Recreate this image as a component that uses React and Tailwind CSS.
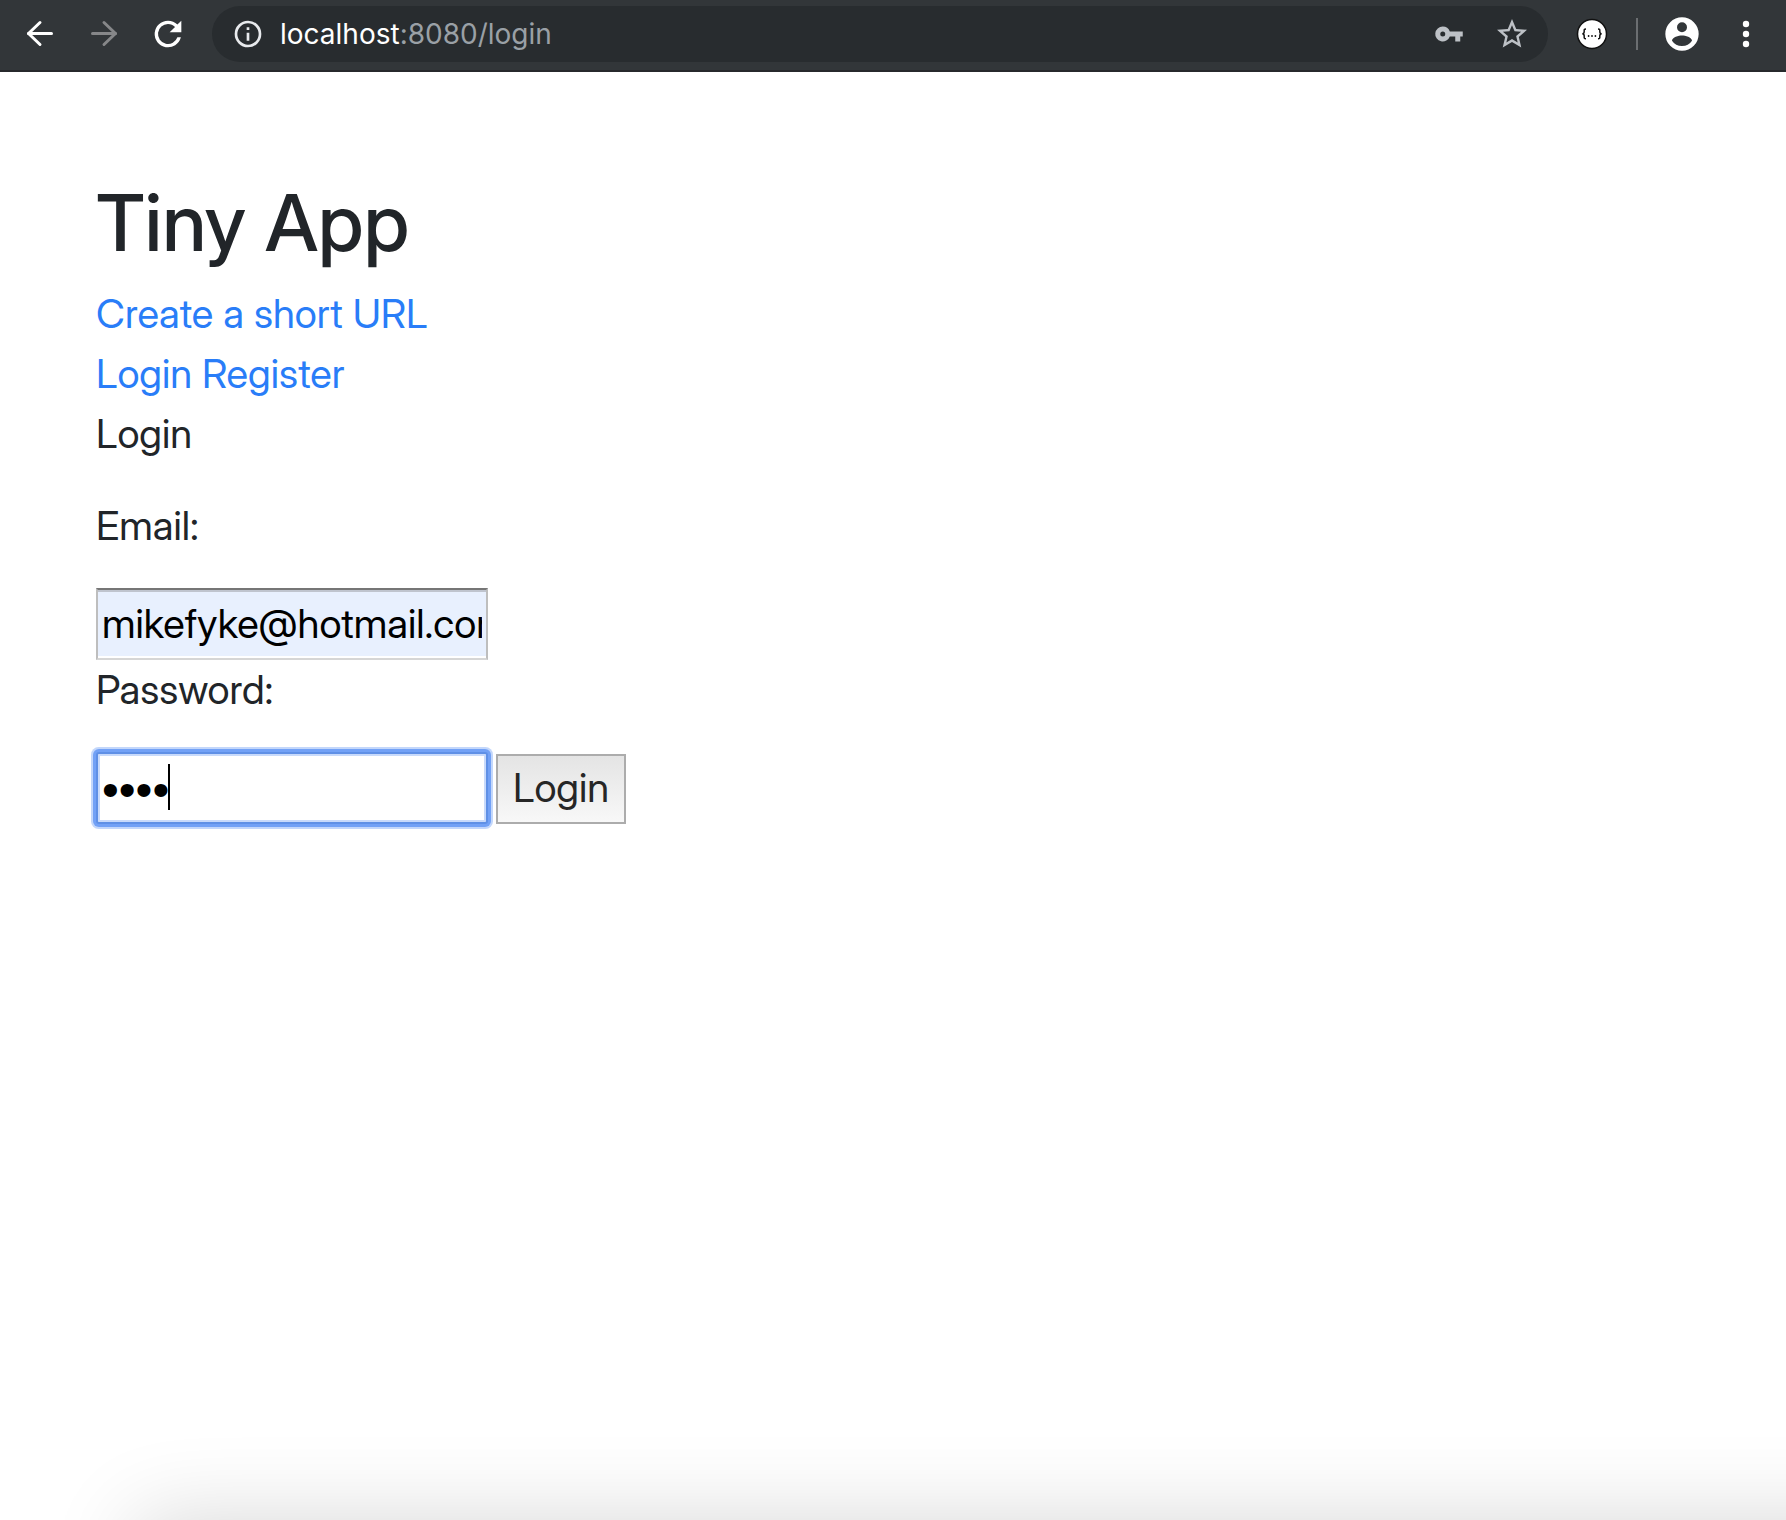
import React from "react";

function Icon({ size, d }) {
  return (
    <svg width={size} height={size} viewBox="0 0 24 24" fill="currentColor" aria-hidden="true">
      <path d={d} />
    </svg>
  );
}

function Arrow({ head }) {
  return (
    <svg
      width="40"
      height="40"
      viewBox="0 0 40 40"
      fill="none"
      stroke="currentColor"
      strokeWidth="3"
      strokeLinecap="round"
      strokeLinejoin="round"
      aria-hidden="true"
    >
      <path d="M8.5 19.5h23" />
      <path d={head} />
    </svg>
  );
}

const RELOAD =
  "M17.65 6.35A7.96 7.96 0 0 0 12 4a8 8 0 1 0 7.73 10h-2.08A6 6 0 1 1 12 6c1.66 0 3.14.69 4.22 1.78L13 11h7V4z";
const INFO =
  "M11 7h2v2h-2zm0 4h2v6h-2zm1-9a10 10 0 1 0 0 20 10 10 0 0 0 0-20zm0 18a8 8 0 1 1 0-16 8 8 0 0 1 0 16z";
const KEY =
  "M12.65 10A5.99 5.99 0 0 0 7 6a6 6 0 1 0 5.65 8H17v4h4v-4h2v-4zM7 14a2 2 0 1 1 0-4 2 2 0 0 1 0 4z";
const STAR =
  "M22 9.24l-7.19-.62L12 2 9.19 8.63 2 9.24l5.46 4.73L5.82 21 12 17.27 18.18 21l-1.63-7.03zM12 15.4l-3.76 2.27 1-4.28-3.32-2.88 4.38-.38L12 6.1l1.71 4.04 4.38.38-3.32 2.88 1 4.28z";
const ACCOUNT =
  "M12 2a10 10 0 1 0 0 20 10 10 0 0 0 0-20zm0 3a3 3 0 1 1 0 6 3 3 0 0 1 0-6zm0 14.2a7.2 7.2 0 0 1-6-3.22c.03-1.99 4-3.08 6-3.08 1.99 0 5.97 1.09 6 3.08a7.2 7.2 0 0 1-6 3.22z";

function Toolbar() {
  return (
    <header className="flex h-[72px] items-center border-b-2 border-[#27292c] bg-[#323639] px-5 pb-0.5 font-['Inter','Liberation_Sans',sans-serif] text-white">
      <nav className="flex items-center gap-6" aria-label="History">
        <button type="button" aria-label="Back"><Arrow head="M20 8.5l-11.5 11 11.5 11" /></button>
        <button type="button" aria-label="Forward" className="text-[#868789]"><Arrow head="M20 8.5l11.5 11-11.5 11" /></button>
        <button type="button" aria-label="Reload"><Icon size={40} d={RELOAD} /></button>
      </nav>
      <div className="ml-6 flex h-14 flex-1 items-center rounded-full bg-[#282c2f] pr-[18px] pl-5">
        <button type="button" aria-label="Site information" className="text-[#e8eaed]"><Icon size={32} d={INFO} /></button>
        <p className="ml-4 flex-1 text-[28px] leading-9 text-[#9aa0a6]">
          <span className="text-white">localhost</span>:8080/login
        </p>
        <button type="button" aria-label="Passwords" className="text-[#bdc1c6]"><Icon size={30} d={KEY} /></button>
        <button type="button" aria-label="Bookmark" className="ml-[30px] text-[#bdc1c6]"><Icon size={36} d={STAR} /></button>
      </div>
      <button type="button" aria-label="JSON viewer" className="ml-7">
        <svg width="32" height="32" viewBox="0 0 32 32" aria-hidden="true">
          <circle cx="16" cy="16" r="14.5" fill="#fff" stroke="#111" strokeWidth="1.5" />
          <g fill="none" stroke="#111" strokeWidth="1.5">
            <path d="M10 11c-2.2 0-1.8 1-1.8 2.5s-.4 2.3-1.9 2.3c1.5 0 1.9.8 1.9 2.3s-.4 2.6 1.8 2.6" />
            <path d="M22 11c2.2 0 1.8 1 1.8 2.5s.4 2.3 1.9 2.3c-1.5 0-1.9.8-1.9 2.3s.4 2.6-1.8 2.6" />
          </g>
          <g fill="#111"><circle cx="12.6" cy="18" r=".9" /><circle cx="16" cy="18" r=".9" /><circle cx="19.4" cy="18" r=".9" /></g>
        </svg>
      </button>
      <div className="ml-7 h-8 w-0.5 bg-[#6b6e71]" />
      <button type="button" aria-label="Profile" className="ml-6"><Icon size={40} d={ACCOUNT} /></button>
      <button type="button" aria-label="Menu" className="ml-6">
        <svg width="40" height="40" viewBox="0 0 40 40" fill="currentColor" aria-hidden="true">
          <circle cx="20" cy="10" r="3.2" /><circle cx="20" cy="20" r="3.2" /><circle cx="20" cy="30" r="3.2" />
        </svg>
      </button>
    </header>
  );
}

export default function App() {
  return (
    <div className="flex min-h-screen flex-col bg-white font-['Inter_Display','Inter','Liberation_Sans',sans-serif] text-[#212529]">
      <Toolbar />
      <main className="relative flex-1 overflow-hidden px-24 pt-[102px] text-[40px] leading-[60px]">
        <h1 className="mb-3.5 text-[79px] leading-[96px] font-medium">Tiny App</h1>
        <div><a href="#create" className="text-[#297df8]">Create a short URL</a></div>
        <div className="text-[#297df8]"><a href="#login">Login</a> <a href="#register">Register</a></div>
        <p>Login</p>
        <form className="mt-8" onSubmit={(e) => e.preventDefault()}>
          <label htmlFor="email" className="block">Email:</label>
          <input
            id="email"
            type="text"
            defaultValue="mikefyke@hotmail.com"
            className="mt-8 block h-[72px] w-[392px] border-2 border-t-[#767676] border-r-[#bebebe] border-b-[#d6d6d6] border-l-[#bebebe] bg-[#e8f0fe] px-1 pb-0.5 text-black shadow-[inset_0_2px_0_#bfc4ce,inset_0_-2px_0_#fff] outline-none"
          />
          <label htmlFor="password" className="block">Password:</label>
          <div className="mt-8 flex items-center gap-2">
            <div className="relative">
              <input
                id="password"
                type="password"
                defaultValue="tiny"
                className="block h-[72px] w-[392px] rounded-[3px] border-2 border-[#5f90e6] bg-white px-1 pt-0.5 font-['Liberation_Sans',sans-serif] text-[48px] text-black caret-transparent shadow-[0_0_0_3px_#72a1f6,0_0_0_5px_#c3d7fb,inset_0_0_0_2px_#c8dafb] outline-none"
              />
              <span className="absolute top-3 left-[72px] h-[46px] w-0.5 bg-black" />
            </div>
            <button type="submit" className="mt-0.5 h-[70px] border-2 border-[#acacac] bg-linear-to-b from-[#e4e4e4] to-[#f8f8f8] px-[15px] pb-0.5 text-[#262626]">
              Login
            </button>
          </div>
        </form>
        <div className="pointer-events-none absolute top-full right-[-200px] left-[136px] h-40 shadow-[0_0_88px_rgba(0,0,0,0.16)]" />
      </main>
    </div>
  );
}
